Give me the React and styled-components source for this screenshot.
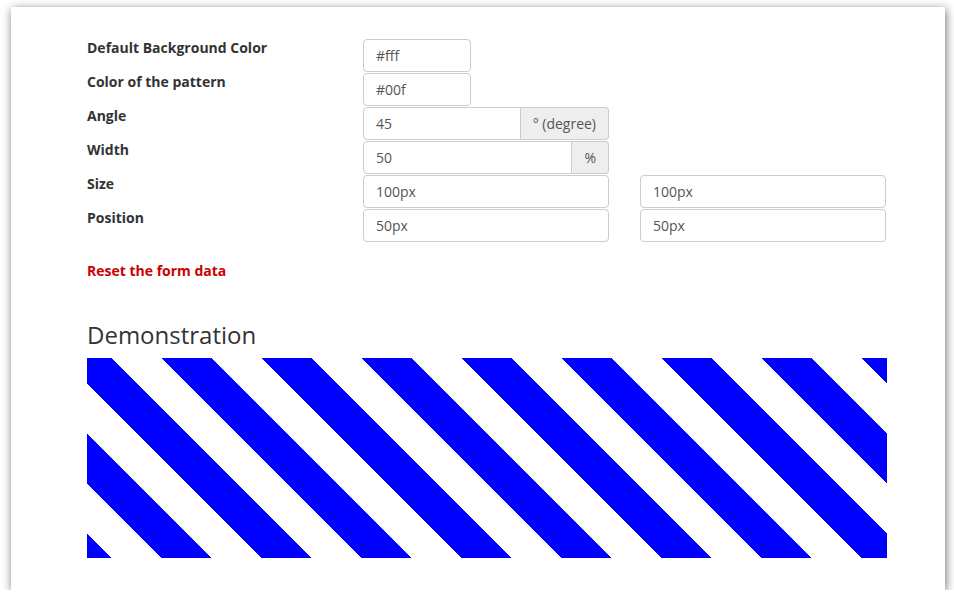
import React from "react";
import styled, {createGlobalStyle} from "styled-components";

const GlobalStyle = createGlobalStyle`
  body {
    margin: 0;
    background: #fff;
    font-family: "Open Sans", "Liberation Sans", sans-serif;
  }
`;

const Window = styled.div`
  box-sizing: border-box;
  width: 934px;
  height: 583px;
  margin: 7px 0 0 11px;
  background: #fff;
  box-shadow: 1px 2px 9px rgba(0, 0, 0, 0.55);
  padding: 32px 58px 0 76px;
`;

const Row = styled.div`
  display: flex;
  height: 33px;
  margin-bottom: 1px;
`;

const Label = styled.div`
  width: 276px;
  flex: none;
  font-size: 14px;
  font-weight: bold;
  line-height: 17px;
  color: #333;
`;

const Fields = styled.div`
  display: flex;
  gap: 31px;
`;

const Group = styled.div`
  display: flex;
  width: ${props => props.width}px;
`;

const Input = styled.input`
  box-sizing: border-box;
  width: ${props => (props.width ? `${props.width}px` : "auto")};
  flex: ${props => (props.width ? "none" : "1")};
  min-width: 0;
  height: 33px;
  padding: 0 12px 1px;
  border: 1px solid #ccc;
  border-radius: ${props => (props.joined ? "4px 0 0 4px" : "4px")};
  font-family: "Open Sans", "Liberation Sans", sans-serif;
  font-size: 14px;
  color: #555;
  background: #fff;
  outline: none;
`;

const Addon = styled.span`
  box-sizing: border-box;
  display: flex;
  align-items: center;
  height: 33px;
  padding: 0 12px;
  border: 1px solid #ccc;
  border-left: none;
  border-radius: 0 4px 4px 0;
  background: #eee;
  font-size: 14px;
  color: #555;
  white-space: nowrap;
`;

const ResetLink = styled.a`
  display: block;
  margin-top: 20px;
  font-size: 14px;
  font-weight: bold;
  line-height: 18px;
  color: #c00;
  text-decoration: none;
`;

const Heading = styled.h2`
  margin: 40px 0 8px;
  font-size: 24px;
  font-weight: normal;
  line-height: 30px;
  color: #333;
`;

const Demo = styled.div`
  width: 800px;
  height: 200px;
  background-color: #fff;
  background-image: linear-gradient(
    45deg,
    #00f 25%,
    transparent 25%,
    transparent 50%,
    #00f 50%,
    #00f 75%,
    transparent 75%,
    transparent
  );
  background-size: 100px 100px;
  background-position: 25px 50px;
`;

const rows = [
  {label: "Default Background Color", fields: [{value: "#fff", width: 108}]},
  {label: "Color of the pattern", fields: [{value: "#00f", width: 108}]},
  {label: "Angle", fields: [{value: "45", addon: "° (degree)"}]},
  {label: "Width", fields: [{value: "50", addon: "%"}]},
  {label: "Size", fields: [{value: "100px", width: 246}, {value: "100px", width: 246}]},
  {label: "Position", fields: [{value: "50px", width: 246}, {value: "50px", width: 246}]},
];

function Field({field}) {
    if (field.addon) {
        return (
            <Group width={246}>
                <Input joined defaultValue={field.value}/>
                <Addon>{field.addon}</Addon>
            </Group>
        );
    }
    return <Input width={field.width} defaultValue={field.value}/>;
}

export default function App() {
    return (
        <>
            <GlobalStyle/>
            <Window>
                {rows.map(row => (
                    <Row key={row.label}>
                        <Label>{row.label}</Label>
                        <Fields>
                            {row.fields.map((field, i) => (
                                <Field key={i} field={field}/>
                            ))}
                        </Fields>
                    </Row>
                ))}
                <ResetLink href="#">Reset the form data</ResetLink>
                <Heading>Demonstration</Heading>
                <Demo/>
            </Window>
        </>
    );
}
